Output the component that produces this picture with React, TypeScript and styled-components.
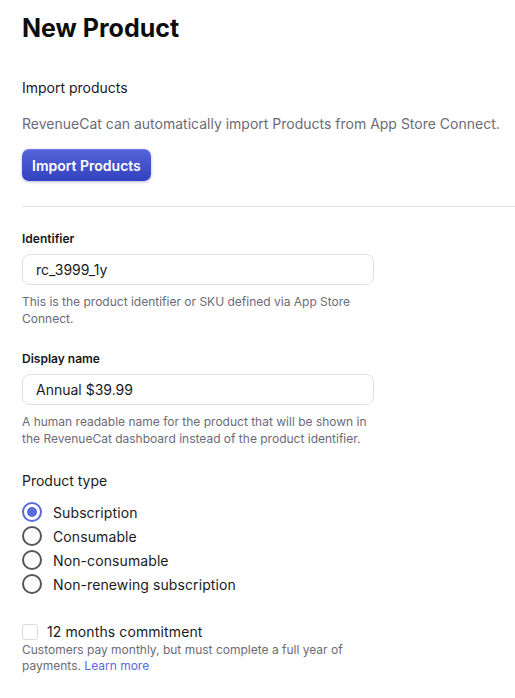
import React from "react";
import styled, { createGlobalStyle } from "styled-components";

const Global = createGlobalStyle`
  html, body { margin: 0; padding: 0; background: #ffffff; }
  body { font-family: Inter, "Noto Sans", sans-serif; color: #1a1a1f; -webkit-font-smoothing: antialiased; }
  * { box-sizing: border-box; }
`;

const Page = styled.div`
  padding: 14px 0 0 22px;
  display: flex;
  flex-direction: column;
`;

const Title = styled.h1`
  margin: 0;
  font-size: 25px;
  line-height: 29px;
  font-weight: 700;
  letter-spacing: 0;
  color: #0d0d10;
`;

const Section = styled.section`
  display: flex;
  flex-direction: column;
`;

const SectionTitle = styled.div`
  margin-top: 36px;
  font-size: 14px;
  line-height: 18px;
  color: #1a1a1f;
`;

const Muted = styled.p`
  margin: 18px 0 0;
  font-size: 14px;
  line-height: 18px;
  color: #6b6b78;
  white-space: nowrap;
`;

const PrimaryButton = styled.button`
  align-self: flex-start;
  margin-top: 16px;
  height: 32px;
  padding: 0 10px;
  border: none;
  border-radius: 7px;
  background: linear-gradient(180deg, #5565db 0%, #3241bd 100%);
  box-shadow: 0 1px 3px rgba(40, 50, 150, 0.35), inset 0 1px 0 rgba(255,255,255,0.15);
  color: #ffffff;
  font-family: inherit;
  font-size: 14px;
  font-weight: 600;
  cursor: pointer;
`;

const Divider = styled.hr`
  margin: 25px 0 0;
  border: none;
  border-top: 1px solid #e2e2e6;
`;

const Field = styled.div<{ $top: number }>`
  display: flex;
  flex-direction: column;
  margin-top: ${(p) => p.$top}px;
  width: 352px;
`;

const Label = styled.label`
  font-size: 12px;
  line-height: 15px;
  font-weight: 600;
  color: #16161a;
`;

const Input = styled.input`
  margin-top: 8px;
  height: 31px;
  padding: 0 13px;
  border: 1px solid #e0e0e4;
  border-radius: 8px;
  font-family: inherit;
  font-size: 14px;
  color: #1a1a1f;
  outline: none;
  background: #fff;
`;

const Help = styled.div`
  margin-top: 8px;
  font-size: 12px;
  line-height: 17px;
  color: #6b6b78;
`;

const Group = styled.div`
  margin-top: 25px;
  display: flex;
  flex-direction: column;
`;

const GroupTitle = styled.div`
  font-size: 14px;
  line-height: 18px;
  color: #1a1a1f;
`;

const RadioList = styled.div`
  margin-top: 10px;
  display: flex;
  flex-direction: column;
`;

const RadioRow = styled.label`
  display: flex;
  align-items: center;
  gap: 11px;
  height: 24px;
  font-size: 14px;
  letter-spacing: 0.1px;
  color: #1a1a1f;
`;

const RadioCircle = styled.span<{ $checked?: boolean }>`
  width: 20px;
  height: 20px;
  border-radius: 50%;
  border: 2px solid ${(p) => (p.$checked ? "#5a6ae0" : "#55555f")};
  display: flex;
  align-items: center;
  justify-content: center;
  &::after {
    content: "";
    width: 10px;
    height: 10px;
    border-radius: 50%;
    background: #5a6ae0;
    display: ${(p) => (p.$checked ? "block" : "none")};
  }
`;

const CheckRow = styled.label`
  margin-top: 27px;
  display: flex;
  align-items: center;
  gap: 9px;
  font-size: 14px;
  line-height: 18px;
  letter-spacing: 0.1px;
  color: #1a1a1f;
`;

const CheckBox = styled.span`
  width: 16px;
  height: 16px;
  border: 1px solid #dcdce0;
  border-radius: 3px;
  background: #fff;
`;

const CheckHelp = styled.p`
  margin: 1px 0 0;
  width: 340px;
  font-size: 12px;
  line-height: 16px;
  color: #6b6b78;
`;

const Link = styled.a`
  color: #5a6ae0;
  text-decoration: none;
`;

const types = ["Subscription", "Consumable", "Non-consumable", "Non-renewing subscription"];

export default function App() {
  return (
    <>
      <Global />
      <Page>
        <Title>New Product</Title>
        <Section>
          <SectionTitle>Import products</SectionTitle>
          <Muted>RevenueCat can automatically import Products from App Store Connect.</Muted>
          <PrimaryButton>Import Products</PrimaryButton>
        </Section>
        <Divider />
        <Field $top={24}>
          <Label>Identifier</Label>
          <Input defaultValue="rc_3999_1y" />
          <Help>This is the product identifier or SKU defined via App Store Connect.</Help>
        </Field>
        <Field $top={24}>
          <Label>Display name</Label>
          <Input defaultValue="Annual $39.99" />
          <Help>A human readable name for the product that will be shown in the RevenueCat dashboard instead of the product identifier.</Help>
        </Field>
        <Group>
          <GroupTitle>Product type</GroupTitle>
          <RadioList>
            {types.map((t, i) => (
              <RadioRow key={t}>
                <RadioCircle $checked={i === 0} />
                {t}
              </RadioRow>
            ))}
          </RadioList>
        </Group>
        <CheckRow>
          <CheckBox />
          12 months commitment
        </CheckRow>
        <CheckHelp>
          Customers pay monthly, but must complete a full year of payments. <Link href="#">Learn more</Link>
        </CheckHelp>
      </Page>
    </>
  );
}
